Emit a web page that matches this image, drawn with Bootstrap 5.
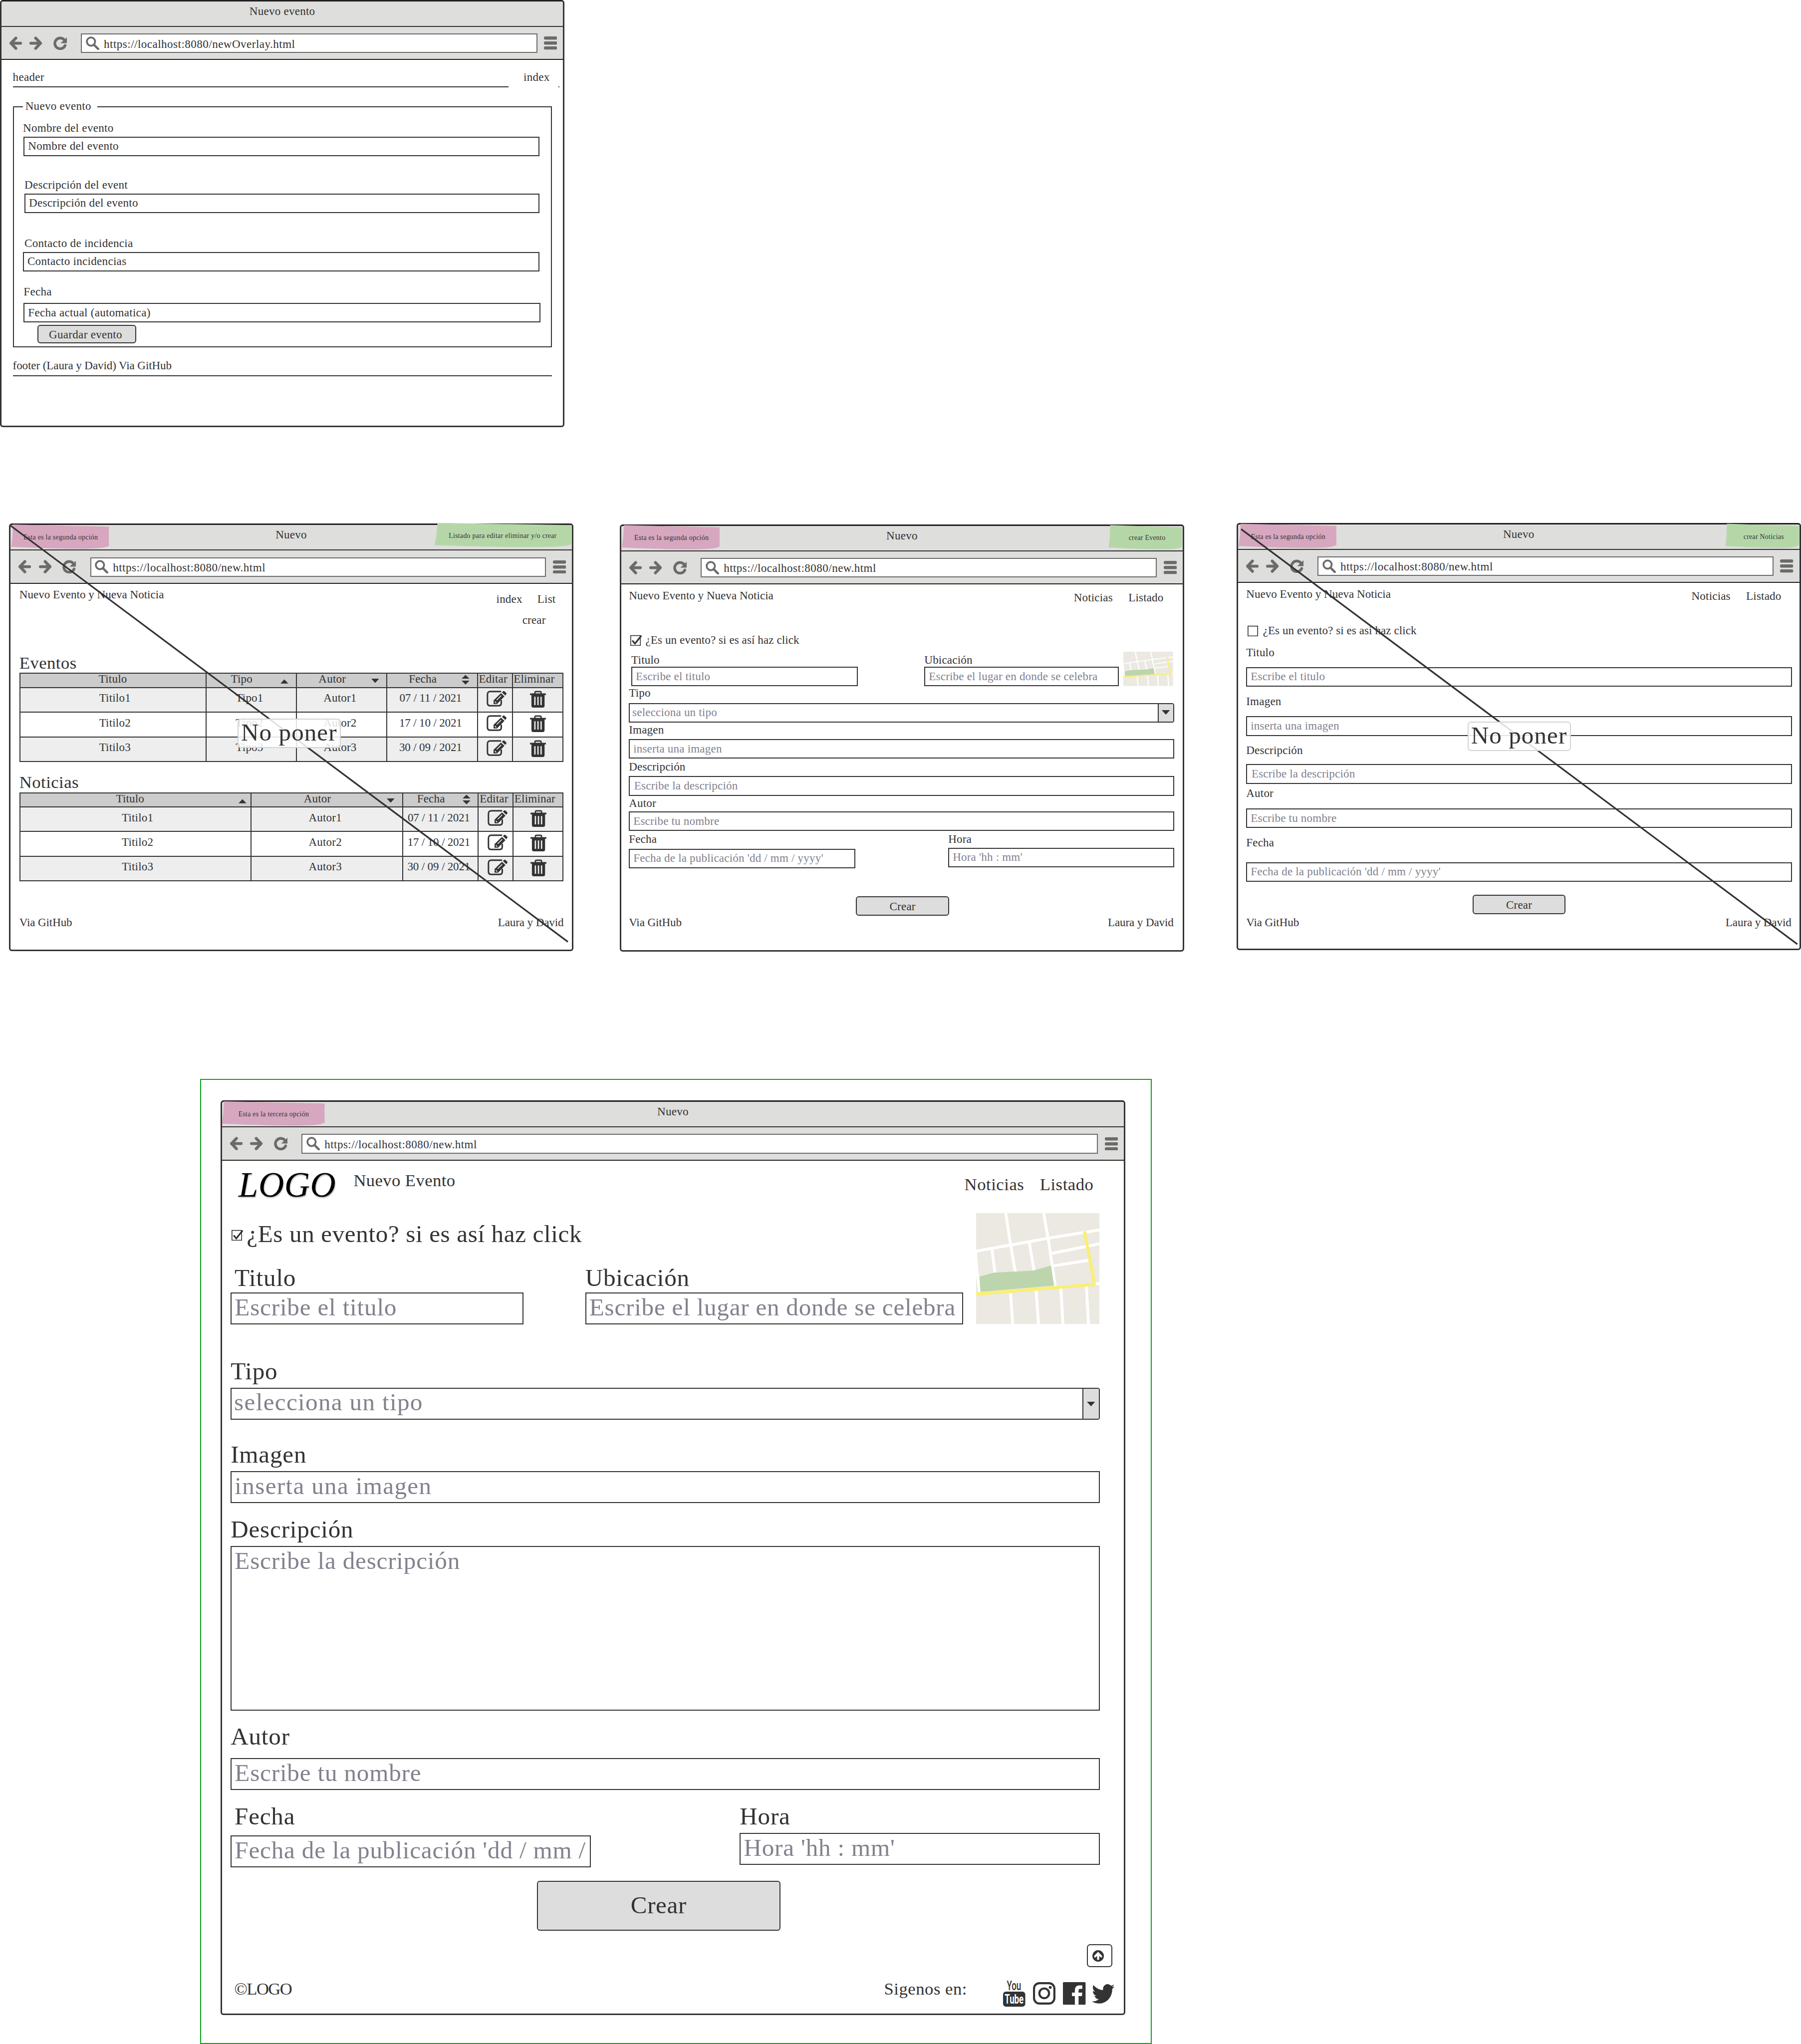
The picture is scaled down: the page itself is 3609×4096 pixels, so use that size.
<!DOCTYPE html>
<html lang="es">
<head>
<meta charset="utf-8">
<meta name="viewport" content="width=device-width, initial-scale=1">
<title>Nuevo evento - wireframes</title>
<link href="https://cdn.jsdelivr.net/npm/bootstrap@5.3.0/dist/css/bootstrap.min.css" rel="stylesheet">
<style>
/* 1rem is ten drawing units of the 4376 x 4966 board */
html{font-size:8.2473px}
body{margin:0;background:#fff;color:#333;font-family:"Liberation Serif","Times New Roman",serif;font-size:2.8rem;line-height:3.4rem;letter-spacing:.0075em;overflow:hidden}
.board{position:relative;width:437.6rem;height:4096px;overflow:hidden}
.text-nowrap-all *{white-space:nowrap}

/* browser windows placed on the board */
.win{position:absolute;background:#fff;width:137.1rem;height:103.8rem;border-radius:.7rem}
.win::after{content:"";position:absolute;inset:0;border:3px solid #333;border-top-color:#231f20;border-radius:.7rem;pointer-events:none}
.win-a{left:0;top:0;width:137.15rem;height:103.75rem}
.win-b{left:2.2rem;top:127.25rem}
.win-c{left:150.6rem;top:127.4rem}
.win-d{left:300.45rem;top:127.05rem}
.win-e{left:53.6rem;top:267.4rem;width:219.8rem;height:222.2rem}
.green-frame{position:absolute;left:48.6rem;top:262.2rem;width:231.2rem;bottom:0;border:2px solid #0ba01b}

/* window chrome */
.titlebar{height:6.55rem;padding-top:.95rem;background:#dededc;border-bottom:2px solid #333;border-radius:.7rem .7rem 0 0;text-align:center;letter-spacing:.01em}
.toolbar-row{height:8.05rem;background:#dededc;border-bottom:2px solid #231f20;padding:.1rem 1.8rem 0 2.1rem;color:#6b6b6b}
.ico-nav{width:3.3rem;height:3.3rem}
.ico-fwd{margin:0 2.5rem 0 1.8rem}
.ico-rel{margin-right:3.4rem}
.url{height:4.75rem;background:#fff;border:2px solid #6b6b6b;padding:0 0 0 .9rem;margin-right:1.6rem}
.url span{color:#333;letter-spacing:.02em;margin-left:1.1rem;padding-top:.25rem}
.ico-menu{width:3.2rem;height:3.2rem}

/* form parts */
.box,.pick{border:2px solid #333;background:#fff;border-radius:0;height:4.75rem;padding:.3rem 0 0 .85rem;font-size:inherit;line-height:3.4rem;color:inherit;letter-spacing:inherit;overflow:hidden;white-space:nowrap}
.box.hint,.pick.hint{color:#82828e}
.pick{padding:0;border-radius:0 .5rem .5rem 0}
.pick>span:first-child{padding:.25rem 0 0 .6rem}
.pick .arrow{width:3.7rem;background:#ddd;border-left:2px solid #333;padding-top:1.55rem}
.pick .arrow svg{width:2rem;height:1.1rem;display:block;margin:auto}
.push{width:22.6rem;height:4.75rem;background:#ddd;border:2px solid #333;border-radius:.7rem;font-size:inherit;line-height:3.4rem;color:inherit;padding:0;justify-self:center;letter-spacing:inherit}
.tick{width:2.9rem;height:2.7rem;overflow:visible}
.pane{display:grid;align-items:start;grid-template-columns:minmax(0,1fr)}

/* window A */
.pane-a{padding:2.35rem 3rem 0 3.1rem;grid-template-rows:7rem 60.45rem 6.9rem;letter-spacing:.012em}
.head-a{width:120.4rem;height:4.25rem;border-bottom:2px solid #333}
.idx-a{margin-left:3.7rem}
.dot-a{width:2px;height:2px;background:#333;margin:4.05rem -1.8rem 0 auto}
.fs-a{border:2px solid #333;height:60.45rem;padding:1.4rem 2.8rem 0 2.4rem;margin-right:.05rem}
.fs-a legend{float:none;width:auto;font-size:inherit;line-height:3.4rem;margin:0 0 0 -.2rem;padding:0 1.5rem .6rem .6rem}
.grid-a{display:grid;align-items:start;grid-template-rows:3.88rem 9.92rem 3.88rem 10.32rem 3.87rem 7.93rem 4.5rem 5.35rem 4.4rem}
.in-l{margin-left:-.17rem}
.in-r{margin-left:.2rem}
.wide{margin-right:-.25rem}
.push-a{width:24rem;height:4.4rem;justify-self:start;margin-left:3.4rem;padding:0 .7rem 0 0;line-height:3.4rem}
.foot-a{margin-top:2.7rem;height:4.3rem;border-bottom:2px solid #333;letter-spacing:-.0045em}

/* window B */
.pane-b{padding:.9rem 2.35rem 0 2.5rem;grid-template-rows:15.79rem 4.96rem 24.08rem 4.92rem 29.85rem 3.4rem}
.nav-b{margin:1.05rem 1.95rem 0 0;text-align:right}
.nav-b .first{margin-right:3.65rem}
.nav-b .sub{margin:1.65rem 2.4rem 0 0}
.h-list{font-size:4.2rem;line-height:5rem;font-weight:400;margin:0;letter-spacing:.014em}
.grid-t{table-layout:fixed;border-collapse:collapse;width:100%;margin:0;color:#333;--bs-table-color:#333;--bs-table-bg:transparent}
.grid-t th,.grid-t td{border:2px solid #333!important;padding:0!important;text-align:center;box-shadow:none!important;font-weight:400;vertical-align:top;line-height:3.4rem}
.grid-t thead th{background:#ccc!important;height:3.4rem;line-height:2.65rem}
.grid-t thead tr{height:3.42rem}
.grid-t tbody tr{height:6rem}
.grid-t tbody td{padding:.7rem .8rem 0 0!important}
.grid-t tbody td:first-child{padding:.7rem 0 0 1rem!important}
.grid-t tbody tr:nth-child(odd) td{background:#eee!important}
.grid-t .srt{width:4.6rem;text-align:left;height:2.75rem}
.grid-t .srt svg{width:1.9rem;height:2.7rem;display:block;margin-left:.9rem}
.grid-t .far svg{margin-left:1.7rem}
.grid-t .far-text{padding-left:2rem}
.grid-t .lft{text-align:left;padding-left:.2rem!important}
.first-b{padding-left:1rem!important}
.date{letter-spacing:-.008em}
.ico-edit{width:4.9rem;height:4rem;display:block;margin:-.1rem 0 0 2.1rem}
.ico-trash{width:3.9rem;height:4.15rem;display:block;margin:-.1rem 0 0 4.15rem}
.c1{width:45.2rem}.c2,.c3,.c4{width:22rem}.c5{width:8.45rem}
.k1{width:56.2rem}.k2{width:36.8rem}.k3{width:18.4rem}.k4{width:8.45rem}
.tight{letter-spacing:-.005em}
.name-s{letter-spacing:0}

/* windows C and D */
.pane-c{padding:.95rem 2.4rem 0 2.2rem;grid-template-rows:10.8rem 4.8rem 8.1rem 4.15rem 4.75rem 4.05rem 4.92rem 4.08rem 4.75rem 3.85rem 4.95rem 15.65rem 4.55rem 3.4rem}
.pane-d{padding:.95rem 2.15rem 0 2.35rem;grid-template-rows:8.8rem 5.4rem 5.3rem 6.6rem 5.35rem 6.55rem 5.1rem 5.3rem 5.45rem 6.55rem 6.5rem 7.95rem 4.95rem 3.4rem}
.nav-c{gap:3.8rem;margin:.5rem 2.6rem 0 0}
.nav-c span{letter-spacing:.007em}
.chk-c svg{margin:.5rem .85rem 0 .3rem}
.chk-c{letter-spacing:.003em}
.w-title{width:55rem;margin-left:.6rem}
.w-place{width:47.2rem;margin-left:16.2rem}
.w-date{width:55rem}
.w-hour{width:54.9rem}
.w-title .box,.w-place .box{margin-top:.05rem}
.w-date .box{margin-top:.65rem}
.w-hour .box{margin-top:.45rem}
.map-c{width:12.1rem;height:8.35rem;margin:-.15rem 0 0 1.2rem}
.box.in-x{padding-left:1.05rem}
.push-c{margin-left:.5rem}
.foot-pad{margin-right:.15rem}

/* window E */
.pane-e{padding:0 6.18rem 0 2.44rem;font-size:5.96rem;line-height:7rem;letter-spacing:.0165em;grid-template-rows:12.8rem 34.85rem 7.58rem 12.68rem 7.53rem 10.71rem 7.52rem 42.83rem 8.73rem 10.67rem 19.08rem 15.42rem 8.36rem 7.2rem}
.pane-e .box,.pane-e .pick{height:7.75rem;line-height:6.6rem}
.pane-e .box{padding:.1rem 0 0 .75rem}
.pane-e .pick>span:first-child{padding:0 0 0 .6rem}
.pane-e .pick .arrow{width:3.95rem;padding-top:3.1rem}
.pane-e .area{height:40rem}
.loose{letter-spacing:.027em!important}
.mid{font-size:4.2rem;line-height:5rem;letter-spacing:.012em}
.logo-e{font-size:8.6rem;line-height:10rem;font-style:italic;color:#000;width:29.86rem;flex:none;padding-left:1.9rem;margin-top:.83rem;letter-spacing:.009em;text-shadow:.1rem .3rem .3rem rgba(0,0,0,.3)}
.name-e{margin-top:2.28rem}
.nav-e{margin:3.26rem 1.5rem 0 0;gap:3.8rem;letter-spacing:.016em}
.chk-e{padding-top:1.6rem;height:12.25rem;letter-spacing:.0125em}
.chk-e svg{margin:2.4rem .8rem 0 .2rem;width:2.9rem}
.w-te{width:71.2rem}.w-pe{width:91.8rem;margin-left:14.95rem}
.w-pe .box{letter-spacing:.0155em}
.map-e{width:30rem;height:26.95rem}
.w-de{width:87.5rem}.w-he{width:87.5rem}
.w-de .box{margin-top:1.1rem}
.w-he .box{margin-top:.5rem}
.off{padding-left:.95rem}
.push-e{width:59.2rem;height:12.2rem;line-height:7rem;padding:0 0 .4rem;margin-left:-3.2rem;letter-spacing:.012em}
.up-e{width:6.2rem;height:5.6rem;border:2px solid #333;border-radius:.8rem;justify-self:end;margin-right:-3.03rem;padding:1.2rem 0 0 1.15rem;line-height:0}
.up-e svg{width:2.8rem;height:2.8rem}
.foot-e{margin-right:-3.6rem}
.copy-e{letter-spacing:-.045em;padding-left:.9rem}
.follow{margin-right:8.8rem;letter-spacing:.015em}
.foot-e svg{overflow:visible}
.soc-yt{width:5.4rem;height:6.5rem;margin:.4rem 1.8rem 0 0}
.soc-ig{width:5.45rem;height:5.45rem;margin:.9rem 1.9rem 0 0}
.soc-fb{width:5.5rem;height:5.5rem;margin:.9rem 1.5rem 0 0}
.soc-tw{width:5.5rem;height:4.7rem;margin-top:1.3rem}

/* sticky notes, strike lines and stamps lie over the windows */
.note{position:absolute;z-index:2;height:5.9rem;font-size:1.68rem;line-height:2rem;letter-spacing:.02em;padding-top:2.2rem;text-align:center;white-space:nowrap;clip-path:polygon(2% 0,100% 9%,99.7% 40%,100% 88%,96% 94%,88% 98%,74% 100%,50% 99%,25% 96%,0 92%,1.4% 50%)}
.note-pink{background:#d7a6bf;left:.5rem;top:.2rem;width:23.8rem;padding-left:.3rem}
.note-green{background:#b5d7a8;right:.4rem;top:.2rem;width:17.9rem;padding-left:.7rem}
.note-long{width:33.3rem;top:-.2rem;padding-left:0;padding-right:.2rem}
.note-third{left:.3rem;width:25rem;padding-left:.2rem}
.strike{position:absolute;z-index:3;left:0;top:0;width:100%;height:100%}
.stamp{position:absolute;z-index:4;width:25.1rem;height:7.15rem;border:2px solid #d3d3d3;border-radius:.8rem;background:rgba(255,255,255,.85);font-size:5.95rem;line-height:6.4rem;text-align:center;letter-spacing:.022em}
.stamp-b{left:55.5rem;top:47.4rem}
.stamp-d{left:56.1rem;top:48.3rem}
</style>
<script src="https://cdn.jsdelivr.net/npm/bootstrap@5.3.0/dist/js/bootstrap.bundle.min.js"></script>
</head>
<body>
<svg class="d-none" aria-hidden="true">
  <symbol id="i-back" viewBox="0 0 33 33"><path d="M18 4 6 16.500 18 29M6 16.500H29.500" fill="none" stroke="currentColor" stroke-width="7" stroke-linecap="round" stroke-linejoin="round"/></symbol>
  <symbol id="i-fwd" viewBox="0 0 33 33"><path d="M15 4 27 16.500 15 29M27 16.500H3.500" fill="none" stroke="currentColor" stroke-width="7" stroke-linecap="round" stroke-linejoin="round"/></symbol>
  <symbol id="i-rel" viewBox="0 0 33 33"><path d="M28.500 22A13 13 0 1 1 25.500 7.500" fill="none" stroke="currentColor" stroke-width="6.500" stroke-linecap="round"/><path d="M33 2V16.500H17.500Z" fill="currentColor"/></symbol>
  <symbol id="i-find" viewBox="0 0 33 33"><circle cx="12.500" cy="12.500" r="10" fill="none" stroke="currentColor" stroke-width="4.500"/><path d="M20 20.500 30 30.500" stroke="currentColor" stroke-width="5.500" stroke-linecap="round"/></symbol>
  <symbol id="i-menu" viewBox="0 0 32 32"><g fill="currentColor"><rect width="32" height="7.800" rx="3.200"/><rect y="12.100" width="32" height="7.800" rx="3.200"/><rect y="24.200" width="32" height="7.800" rx="3.200"/></g></symbol>
  <symbol id="i-down" viewBox="0 0 20 11" preserveAspectRatio="none"><path d="M0 0H20L10 11Z" fill="#333"/></symbol>
  <symbol id="s-up" viewBox="0 0 19 27"><path d="M0 24 9.500 14 19 24Z" fill="#333"/></symbol>
  <symbol id="s-dn" viewBox="0 0 19 27"><path d="M0 12H19L9.500 22.500Z" fill="#333"/></symbol>
  <symbol id="s-both" viewBox="0 0 19 27"><path d="M0 12 9.500 3 19 12ZM0 17H19L9.500 26.500Z" fill="#333"/></symbol>
  <symbol id="i-on" viewBox="0 0 29 27"><rect x="1" y="2" width="23.500" height="24" fill="#fff" stroke="#333" stroke-width="2"/><path d="M5 14 11.500 21.500 27 2" fill="none" stroke="#333" stroke-width="4"/></symbol>
  <symbol id="i-off" viewBox="0 0 29 27"><rect x="1" y="2" width="23.500" height="24" fill="#fff" stroke="#333" stroke-width="2"/></symbol>
  <symbol id="i-edit" viewBox="0 0 49 40"><path d="M34 2.200H9Q2.200 2.200 2.200 9V30Q2.200 36.800 9 36.800H29Q35.800 36.800 35.800 30V24.500" fill="none" stroke="#333" stroke-width="3.600" stroke-linecap="round"/><path d="M17 32.500V23.500L35 6 43.500 14 25.500 32.500ZM37.300 4.200 40.500 1.300Q42 .2 43.500 1.500L48 5.800Q49 7.300 48 8.600L45.500 11.800Z" fill="#333"/><path d="M20 26.500 23.500 30M24.500 23 35.500 12" stroke="#fff" stroke-width="1.800"/></symbol>
  <symbol id="i-trash" viewBox="0 0 39 41"><path d="M12 8V4.500Q12 2 14.500 2H24.500Q27 2 27 4.500V8" fill="none" stroke="#333" stroke-width="3.200"/><path d="M1.500 6.500H37.500Q39 6.500 39 8V10.500H35.500V36Q35.500 41 31 41H8Q3.500 41 3.500 36V10.500H0V8Q0 6.500 1.500 6.500Z" fill="#333"/><path d="M12 14.500V35M19.500 14.500V35M27 14.500V35" stroke="#eee" stroke-width="3.200"/></symbol>
  <symbol id="i-map" viewBox="0 0 300 270" preserveAspectRatio="none"><rect width="300" height="270" fill="#ebe9e1"/><path d="M0 92.400 88 77 175 61 300 40.800M72 0 84 78 95.400 145M164 0 175 61 192.500 178M38.500 87 46 147M129 70 141 141M184 98 300 74.500M187 128.500 273 115M-1 95 2 140 9 193M83.600 195 89 270M146 188 151.500 270M206 183 211 270M268 178 273 270M289 173 300 170.500" fill="none" stroke="#fff" stroke-width="7"/><path d="M8 154.500 43.600 145 137.600 140 182 128 189.400 176.500 10.400 191.500Z" fill="#bcd5ac"/><path d="M0 197 287 173.500M263.500 44 288 176.500" fill="none" stroke="#faef73" stroke-width="7.500"/></symbol>
</svg>

<div class="board text-nowrap-all">

  <!-- Nuevo evento -->
  <section class="win win-a">
    <div class="titlebar">Nuevo evento</div>
    <div class="toolbar-row d-flex align-items-center">
      <svg class="ico-nav"><use href="#i-back"/></svg><svg class="ico-nav ico-fwd"><use href="#i-fwd"/></svg><svg class="ico-nav ico-rel"><use href="#i-rel"/></svg>
      <div class="url d-flex align-items-center flex-fill"><svg class="ico-nav"><use href="#i-find"/></svg><span>https://localhost:8080/newOverlay.html</span></div>
      <svg class="ico-menu"><use href="#i-menu"/></svg>
    </div>
    <div class="pane pane-a">
      <div class="d-flex"><div class="head-a">header</div><span class="idx-a">index</span><i class="dot-a"></i></div>
      <fieldset class="fs-a">
        <legend>Nuevo evento</legend>
        <div class="grid-a">
          <label class="in-l">Nombre del evento</label>
          <div class="form-control box">Nombre del evento</div>
          <label class="in-r">Descripción del event</label>
          <div class="form-control box in-r w-auto">Descripción del evento</div>
          <label class="in-r">Contacto de incidencia</label>
          <div class="form-control box in-l w-auto">Contacto incidencias</div>
          <label>Fecha</label>
          <div class="form-control box wide w-auto">Fecha actual (automatica)</div>
          <button type="button" class="btn push push-a">Guardar evento</button>
        </div>
      </fieldset>
      <div class="foot-a">footer (Laura y David) Via GitHub</div>
    </div>
  </section>

  <!-- Listado -->
  <section class="win win-b">
    <div class="note note-pink">Esta es la segunda opción</div>
    <div class="note note-green note-long">Listado para editar eliminar y/o crear</div>
    <div class="titlebar">Nuevo</div>
    <div class="toolbar-row d-flex align-items-center">
      <svg class="ico-nav"><use href="#i-back"/></svg><svg class="ico-nav ico-fwd"><use href="#i-fwd"/></svg><svg class="ico-nav ico-rel"><use href="#i-rel"/></svg>
      <div class="url d-flex align-items-center flex-fill"><svg class="ico-nav"><use href="#i-find"/></svg><span>https://localhost:8080/new.html</span></div>
      <svg class="ico-menu"><use href="#i-menu"/></svg>
    </div>
    <div class="pane pane-b">
      <div class="d-flex justify-content-between align-items-start">
        <span class="name-s">Nuevo Evento y Nueva Noticia</span>
        <div class="nav-b"><div><span class="first">index</span><span>List</span></div><div class="sub">crear</div></div>
      </div>
      <h2 class="h-list">Eventos</h2>
      <table class="table grid-t">
        <colgroup><col class="c1"><col class="c2"><col class="c3"><col class="c4"><col class="c5"><col></colgroup>
        <thead><tr>
          <th class="first-b">Titulo</th>
          <th><div class="d-flex"><span class="flex-fill">Tipo</span><span class="srt"><svg><use href="#s-up"/></svg></span></div></th>
          <th><div class="d-flex"><span class="flex-fill">Autor</span><span class="srt"><svg><use href="#s-dn"/></svg></span></div></th>
          <th><div class="d-flex"><span class="flex-fill">Fecha</span><span class="srt"><svg><use href="#s-both"/></svg></span></div></th>
          <th class="lft">Editar</th><th class="lft">Eliminar</th>
        </tr></thead>
        <tbody>
          <tr><td>Titilo1</td><td>Tipo1</td><td>Autor1</td><td class="date">07 / 11 / 2021</td><td><svg class="ico-edit"><use href="#i-edit"/></svg></td><td><svg class="ico-trash"><use href="#i-trash"/></svg></td></tr>
          <tr><td>Titilo2</td><td>Tipo2</td><td>Autor2</td><td class="date">17 / 10 / 2021</td><td><svg class="ico-edit"><use href="#i-edit"/></svg></td><td><svg class="ico-trash"><use href="#i-trash"/></svg></td></tr>
          <tr><td>Titilo3</td><td>Tipo3</td><td>Autor3</td><td class="date">30 / 09 / 2021</td><td><svg class="ico-edit"><use href="#i-edit"/></svg></td><td><svg class="ico-trash"><use href="#i-trash"/></svg></td></tr>
        </tbody>
      </table>
      <h2 class="h-list">Noticias</h2>
      <table class="table grid-t">
        <colgroup><col class="k1"><col class="k2"><col class="k3"><col class="k4"><col></colgroup>
        <thead><tr>
          <th><div class="d-flex"><span class="flex-fill far-text">Titulo</span><span class="srt far"><svg><use href="#s-up"/></svg></span></div></th>
          <th><div class="d-flex"><span class="flex-fill">Autor</span><span class="srt"><svg><use href="#s-dn"/></svg></span></div></th>
          <th><div class="d-flex"><span class="flex-fill">Fecha</span><span class="srt"><svg><use href="#s-both"/></svg></span></div></th>
          <th class="lft">Editar</th><th class="lft">Eliminar</th>
        </tr></thead>
        <tbody>
          <tr><td>Titilo1</td><td>Autor1</td><td class="date">07 / 11 / 2021</td><td><svg class="ico-edit"><use href="#i-edit"/></svg></td><td><svg class="ico-trash"><use href="#i-trash"/></svg></td></tr>
          <tr><td>Titilo2</td><td>Autor2</td><td class="date">17 / 10 / 2021</td><td><svg class="ico-edit"><use href="#i-edit"/></svg></td><td><svg class="ico-trash"><use href="#i-trash"/></svg></td></tr>
          <tr><td>Titilo3</td><td>Autor3</td><td class="date">30 / 09 / 2021</td><td><svg class="ico-edit"><use href="#i-edit"/></svg></td><td><svg class="ico-trash"><use href="#i-trash"/></svg></td></tr>
        </tbody>
      </table>
      <div class="d-flex justify-content-between tight"><span>Via GitHub</span><span>Laura y David</span></div>
    </div>
    <svg class="strike" viewBox="0 0 1371 1038"><path d="M4 5.500 1358 1016.500" stroke="#333" stroke-width="4"/></svg>
    <div class="stamp stamp-b">No poner</div>
  </section>

  <!-- Crear evento -->
  <section class="win win-c">
    <div class="note note-pink">Esta es la segunda opción</div>
    <div class="note note-green">crear Evento</div>
    <div class="titlebar">Nuevo</div>
    <div class="toolbar-row d-flex align-items-center">
      <svg class="ico-nav"><use href="#i-back"/></svg><svg class="ico-nav ico-fwd"><use href="#i-fwd"/></svg><svg class="ico-nav ico-rel"><use href="#i-rel"/></svg>
      <div class="url d-flex align-items-center flex-fill"><svg class="ico-nav"><use href="#i-find"/></svg><span>https://localhost:8080/new.html</span></div>
      <svg class="ico-menu"><use href="#i-menu"/></svg>
    </div>
    <div class="pane pane-c">
      <div class="d-flex justify-content-between align-items-start"><span class="name-s">Nuevo Evento y Nueva Noticia</span><div class="nav-c d-flex"><span>Noticias</span><span>Listado</span></div></div>
      <div class="chk-c d-flex align-items-start"><svg class="tick"><use href="#i-on"/></svg><span>¿Es un evento? si es así haz click</span></div>
      <div class="d-flex align-items-start">
        <div class="w-title"><div>Titulo</div><div class="form-control box hint">Escribe el titulo</div></div>
        <div class="w-place"><div>Ubicación</div><div class="form-control box hint">Escribe el lugar en donde se celebra</div></div>
        <svg class="map-c"><use href="#i-map"/></svg>
      </div>
      <label>Tipo</label>
      <div class="pick d-flex hint"><span class="flex-fill">selecciona un tipo</span><span class="arrow"><svg><use href="#i-down"/></svg></span></div>
      <label>Imagen</label>
      <div class="form-control box hint">inserta una imagen</div>
      <label>Descripción</label>
      <div class="form-control box hint in-x">Escribe la descripción</div>
      <label>Autor</label>
      <div class="form-control box hint">Escribe tu nombre</div>
      <div class="d-flex justify-content-between">
        <div class="w-date"><div>Fecha</div><div class="form-control box hint">Fecha de la publicación 'dd / mm / yyyy'</div></div>
        <div class="w-hour"><div>Hora</div><div class="form-control box hint">Hora 'hh : mm'</div></div>
      </div>
      <button type="button" class="btn push push-c">Crear</button>
      <div class="d-flex justify-content-between tight"><span>Via GitHub</span><span class="foot-pad">Laura y David</span></div>
    </div>
  </section>

  <!-- Crear noticias -->
  <section class="win win-d">
    <div class="note note-pink">Esta es la segunda opción</div>
    <div class="note note-green">crear Noticias</div>
    <div class="titlebar">Nuevo</div>
    <div class="toolbar-row d-flex align-items-center">
      <svg class="ico-nav"><use href="#i-back"/></svg><svg class="ico-nav ico-fwd"><use href="#i-fwd"/></svg><svg class="ico-nav ico-rel"><use href="#i-rel"/></svg>
      <div class="url d-flex align-items-center flex-fill"><svg class="ico-nav"><use href="#i-find"/></svg><span>https://localhost:8080/new.html</span></div>
      <svg class="ico-menu"><use href="#i-menu"/></svg>
    </div>
    <div class="pane pane-d">
      <div class="d-flex justify-content-between align-items-start"><span class="name-s">Nuevo Evento y Nueva Noticia</span><div class="nav-c d-flex"><span>Noticias</span><span>Listado</span></div></div>
      <div class="chk-c d-flex align-items-start"><svg class="tick"><use href="#i-off"/></svg><span>¿Es un evento? si es así haz click</span></div>
      <label>Titulo</label>
      <div class="form-control box hint">Escribe el titulo</div>
      <label>Imagen</label>
      <div class="form-control box hint">inserta una imagen</div>
      <label>Descripción</label>
      <div class="form-control box hint in-x">Escribe la descripción</div>
      <label>Autor</label>
      <div class="form-control box hint">Escribe tu nombre</div>
      <label>Fecha</label>
      <div class="form-control box hint">Fecha de la publicación 'dd / mm / yyyy'</div>
      <button type="button" class="btn push">Crear</button>
      <div class="d-flex justify-content-between tight"><span>Via GitHub</span><span class="foot-pad">Laura y David</span></div>
    </div>
    <svg class="strike" viewBox="0 0 1371 1038"><path d="M11 15 1362.500 1023.500" stroke="#333" stroke-width="4"/></svg>
    <div class="stamp stamp-d">No poner</div>
  </section>

  <!-- Tercera opción -->
  <div class="green-frame"></div>
  <section class="win win-e">
    <div class="note note-pink note-third">Esta es la tercera opción</div>
    <div class="titlebar">Nuevo</div>
    <div class="toolbar-row d-flex align-items-center">
      <svg class="ico-nav"><use href="#i-back"/></svg><svg class="ico-nav ico-fwd"><use href="#i-fwd"/></svg><svg class="ico-nav ico-rel"><use href="#i-rel"/></svg>
      <div class="url d-flex align-items-center flex-fill"><svg class="ico-nav"><use href="#i-find"/></svg><span>https://localhost:8080/new.html</span></div>
      <svg class="ico-menu"><use href="#i-menu"/></svg>
    </div>
    <div class="pane pane-e">
      <div class="d-flex align-items-start">
        <div class="logo-e">LOGO</div>
        <div class="name-e mid me-auto">Nuevo Evento</div>
        <div class="nav-e mid d-flex"><span>Noticias</span><span>Listado</span></div>
      </div>
      <div class="d-flex justify-content-between align-items-start">
        <div>
          <div class="chk-e d-flex align-items-start"><svg class="tick"><use href="#i-on"/></svg><span>¿Es un evento? si es así haz click</span></div>
          <div class="d-flex">
            <div class="w-te"><div class="off">Titulo</div><div class="form-control box hint">Escribe el titulo</div></div>
            <div class="w-pe"><div>Ubicación</div><div class="form-control box hint">Escribe el lugar en donde se celebra</div></div>
          </div>
        </div>
        <svg class="map-e"><use href="#i-map"/></svg>
      </div>
      <label>Tipo</label>
      <div class="pick d-flex hint"><span class="flex-fill loose">selecciona un tipo</span><span class="arrow"><svg><use href="#i-down"/></svg></span></div>
      <label>Imagen</label>
      <div class="form-control box hint loose">inserta una imagen</div>
      <label>Descripción</label>
      <div class="form-control box hint area">Escribe la descripción</div>
      <label>Autor</label>
      <div class="form-control box hint">Escribe tu nombre</div>
      <div class="d-flex justify-content-between">
        <div class="w-de"><div class="off">Fecha</div><div class="form-control box hint">Fecha de la publicación 'dd / mm /</div></div>
        <div class="w-he"><div>Hora</div><div class="form-control box hint">Hora 'hh : mm'</div></div>
      </div>
      <button type="button" class="btn push push-e">Crear</button>
      <div class="up-e"><svg viewBox="0 0 28 28"><circle cx="14" cy="14" r="14" fill="#333"/><path d="M14 4 23.500 13.500V17.500H20.500L16.500 14V23.500H11.500V14L7.500 17.500H4.500V13.500Z" fill="#fff"/></svg></div>
      <div class="foot-e mid d-flex align-items-start">
        <span class="copy-e me-auto">©LOGO</span>
        <span class="follow">Sigenos en:</span>
        <svg class="soc-yt" viewBox="0 0 54 65"><text x="9" y="24" font-family="Roboto" font-weight="500" font-size="31" letter-spacing="0" textLength="35" lengthAdjust="spacingAndGlyphs" fill="#333">You</text><rect y="28" width="54" height="36.500" rx="7" fill="#333"/><text x="4" y="57.500" font-family="Roboto" font-weight="700" font-size="31" letter-spacing="0" textLength="46" lengthAdjust="spacingAndGlyphs" fill="#fff">Tube</text></svg>
        <svg class="soc-ig" viewBox="0 0 54 54"><rect x="2.500" y="2.500" width="49" height="49" rx="13" fill="none" stroke="#333" stroke-width="5"/><circle cx="27" cy="27" r="11.700" fill="none" stroke="#333" stroke-width="5"/><circle cx="41.500" cy="12.700" r="3.500" fill="#333"/></svg>
        <svg class="soc-fb" viewBox="0 0 55 55"><rect width="55" height="55" rx="2" fill="#333"/><path d="M29 55V34H22V25.500H29V20Q29 8 40 8H47V16.500H42Q38 16.500 38 20V25.500H47L46 34H38V55Z" fill="#fff"/></svg>
        <svg class="soc-tw" viewBox="0 0 24 19.500" preserveAspectRatio="none"><path d="M24 2.300c-.9.400-1.800.7-2.800.8 1-.6 1.800-1.600 2.200-2.700-.950.560-2 .970-3.130 1.190A4.920 4.920 0 0 0 11.880 6.080C7.800 5.870 4.170 3.920 1.740.930c-1.300 2.220-.670 5.140 1.520 6.570-.8 0-1.560-.250-2.230-.620-.050 2.280 1.580 4.420 3.950 4.890-.690.190-1.450.230-2.220.080.630 1.950 2.450 3.370 4.600 3.420A9.900 9.900 0 0 1 0 17.300a13.950 13.950 0 0 0 7.550 2.210c9.140 0 14.310-7.720 14-14.640.960-.700 1.790-1.560 2.450-2.550z" fill="#333"/></svg>
      </div>
    </div>
  </section>
</div>
</body>
</html>
